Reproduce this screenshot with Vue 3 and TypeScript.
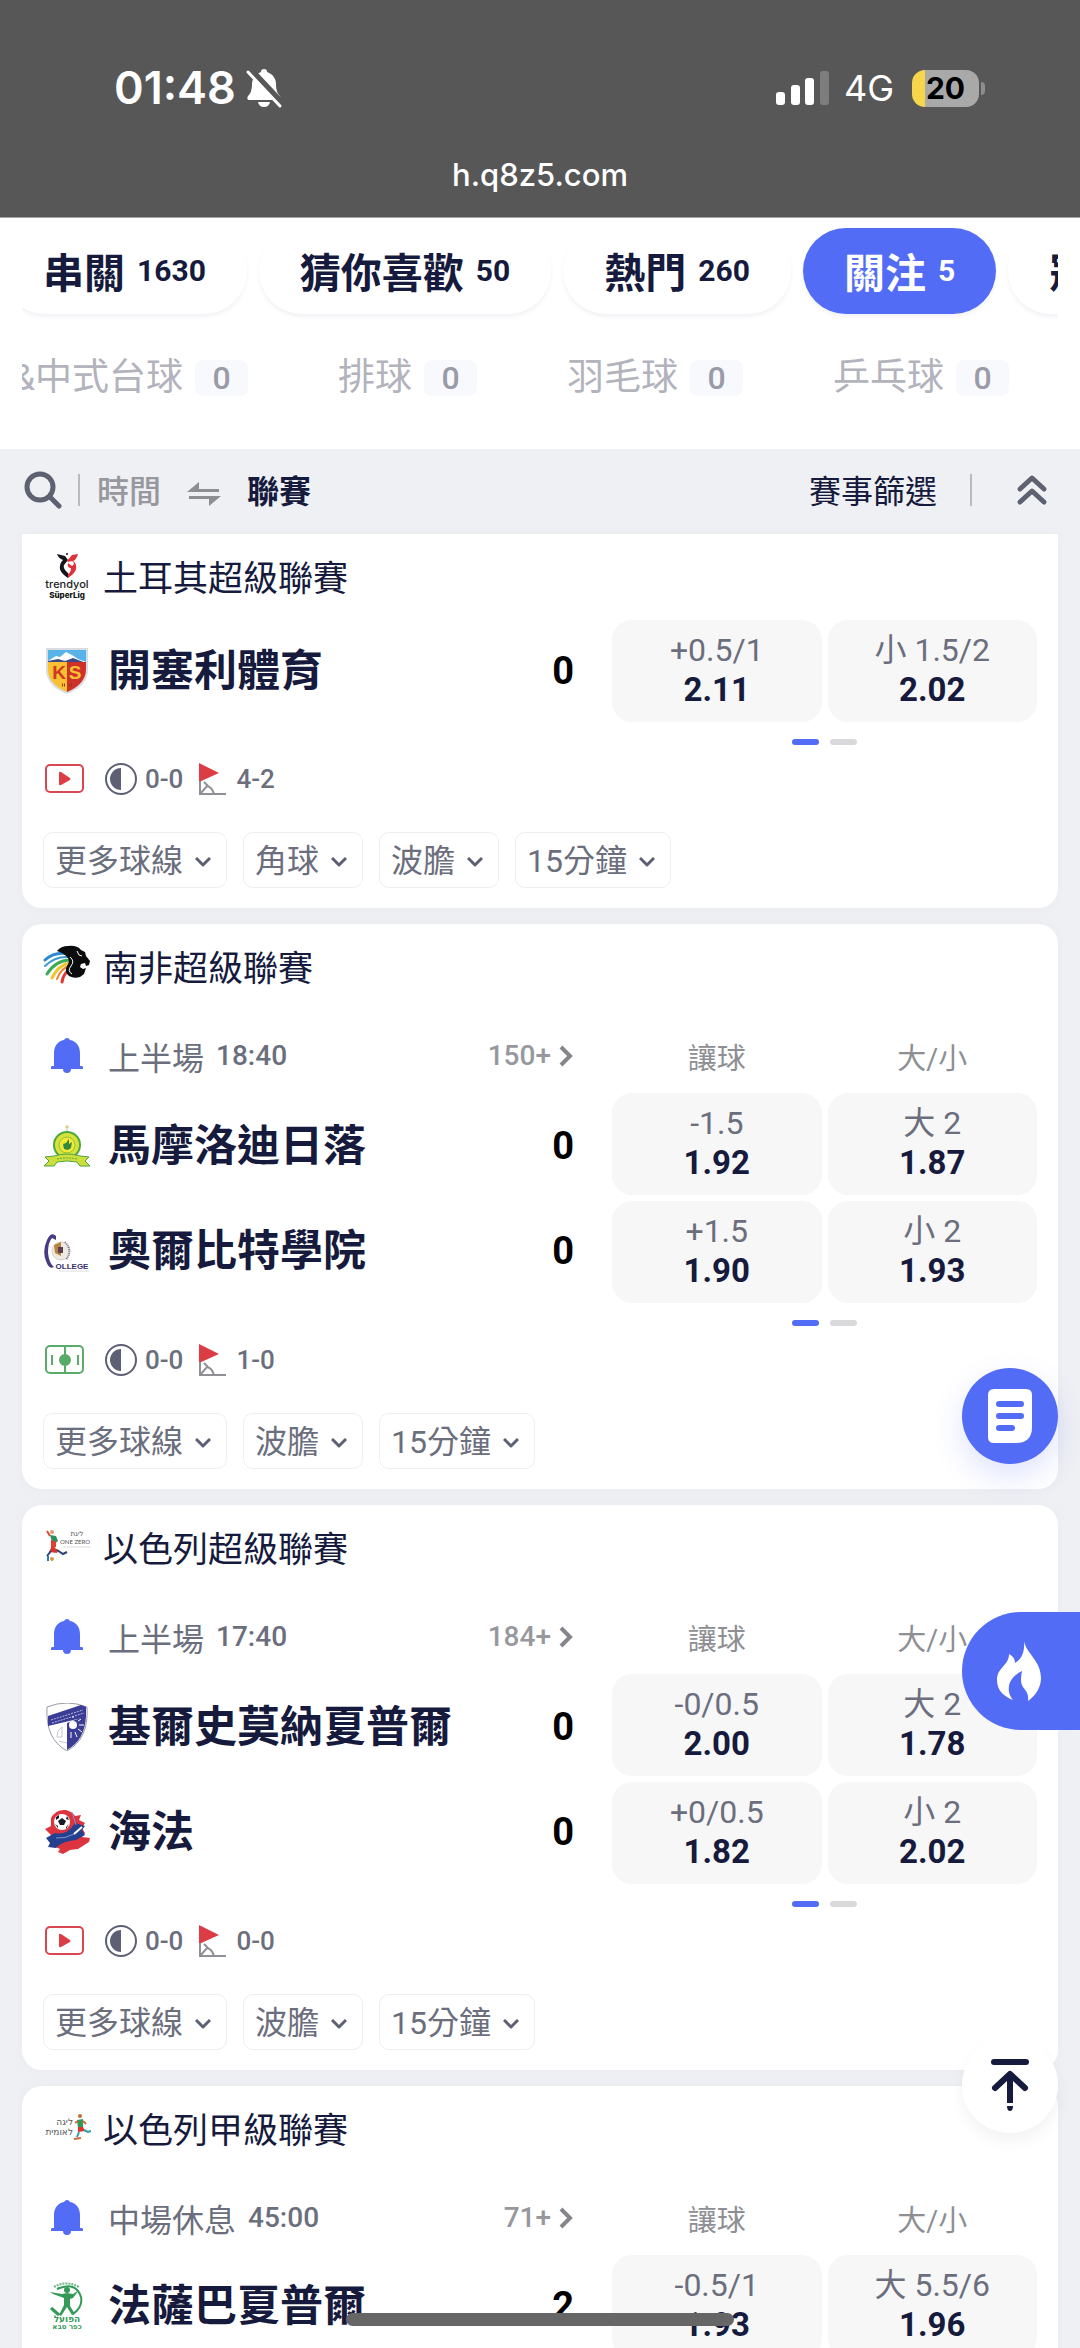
<script setup lang="ts">
import { onMounted, ref } from 'vue'

interface Tab { label: string; count?: number; active?: boolean }
interface Sport { label: string; count: number }
interface Odd { point: string; price: string }
interface Team { logo: string; name: string; score: number; odds: Odd[] }
interface Match {
  league: string
  logo: string
  period?: string
  clock?: string
  markets?: number
  teams: Team[]
  live?: 'video' | 'pitch'
  half?: string
  corners?: string
  more?: string[]
}

const tabs: Tab[] = [
  { label: '串關', count: 1630 },
  { label: '猜你喜歡', count: 50 },
  { label: '熱門', count: 260 },
  { label: '關注', count: 5, active: true },
  { label: '冠軍' },
]

const sports: Sport[] = [
  { label: '斯諾克&中式台球', count: 0 },
  { label: '排球', count: 0 },
  { label: '羽毛球', count: 0 },
  { label: '乒乓球', count: 0 },
]

// League and club badges, each drawn in a 48 by 48 box
const logos: Record<string, string> = {
  turkey: `
    <path d="M14 2l8 2 3 4-4 5c-1 3 1 5 4 8v5c-6-4-9-8-8-12 0-3 2-5 3-6-3-1-5-3-6-6z" fill="#15161b" />
    <path d="M35 2l-6 1-5 6 1 1 4-1c3 2 2 4 0 5l-4-3c-1 3 1 5 3 5 0 3-1 5-3 6v4c6-4 9-8 8-12 0-2-1-4-3-5 3-1 4-4 5-7z" fill="#e0313a" />
    <circle cx="24" cy="2" r="1" fill="#15161b" />
    <text x="24" y="36" text-anchor="middle" font-family="Inter, sans-serif" font-size="11" font-weight="500" fill="#222">trendyol</text>
    <text x="24" y="46" text-anchor="middle" font-family="Inter, sans-serif" font-size="8" font-weight="800" fill="#111">SüperLig</text>`,
  africa: `
    <g fill="none" stroke-width="2" stroke-linecap="round">
      <path d="M26 12Q12 9 2 18" stroke="#2d86d0" stroke-width="3" />
      <path d="M26 15Q12 14 2 24" stroke="#3799d8" />
      <path d="M26 18Q12 19 4 32" stroke="#39ac55" stroke-width="3" />
      <path d="M27 21Q15 23 9 36" stroke="#f3c52d" stroke-width="3" />
      <path d="M28 23Q18 26 14 37" stroke="#ef7c2d" />
      <path d="M29 26Q20 31 19 40" stroke="#e33531" stroke-width="3" />
    </g>
    <path d="M14 9Q18 4 25 4q9-1 13 4l4 2 1 4 4 5-1 4-3 1-1-3-4 1-1 3 3 2 3-1-2 6-4 3q-6 2-11-1-5-4-2-10 3-4 1-8-4-5-11-7z" fill="#0b0c0e" />
    <path d="M27 15q5 4 1 9t1 8M34 9l2 4 3 1" fill="none" stroke="#fff" />`,
  israel: `
    <circle cx="9" cy="9" r="2" fill="#d9a066" />
    <path d="M4 8l3 5" stroke="#e0453a" stroke-width="2" />
    <path d="M7 12l6 1 2 5-5 4z" fill="#2f8f5a" />
    <path d="M8 17l5 2 0 5-5 2z" fill="#e63c31" />
    <path d="M9 23l6 4-1 3-8-1z" fill="#d8352f" />
    <path d="M14 27l6 4 4-2M8 28l-4 5" fill="none" stroke="#2e3f74" stroke-width="2" />
    <circle cx="9" cy="36" r="2" fill="#d59a3a" />
    <path d="M5 33v5" stroke="#2a7abf" stroke-width="2" />
    <text x="34" y="13" text-anchor="middle" font-family="DejaVu Sans, sans-serif" font-size="7" fill="#555">ליגת</text>
    <text x="32" y="21" text-anchor="middle" font-family="Lato, sans-serif" font-size="6" fill="#555">ONE ZERO</text>
    <path d="M20 24h28" stroke="#ddd" />`,
  leumit: `
    <text x="30" y="21" text-anchor="start" direction="rtl" font-family="DejaVu Sans, sans-serif" font-size="9" fill="#555">ליגה</text>
    <text x="30" y="31" text-anchor="start" direction="rtl" font-family="DejaVu Sans, sans-serif" font-size="9" fill="#555">לאומית</text>
    <circle cx="37" cy="12" r="2" fill="#c56a3c" />
    <path d="M34 16l6-1 0 8-5 1z" fill="#2f9a56" />
    <path d="M35 23l5 0 2 4-7 1z" fill="#df352f" />
    <path d="M41 26l4 2 3-1M36 28l-2 5" fill="none" stroke="#2b9fa5" stroke-width="2" />
    <path d="M32 19l3-2M40 17l3 3M31 35l7-1" stroke="#d3663a" stroke-width="2" />`,
  kayseri: `
    <path d="M3 1h42v21q0 17-21 25Q3 39 3 22z" fill="#d9dde2" />
    <path d="M5 3h38v12H5z" fill="#58b4e8" />
    <path d="M5 14l8-5 4 1 6-5 6 3 6 4 8 3v3H5z" fill="#fff" />
    <path d="M5 14l10-2 7 2 8-3 13 5v-1H5z" fill="#3b4a86" />
    <path d="M5 15h19v30Q5 37 5 22z" fill="#f9c132" />
    <path d="M24 15h19v7q0 15-19 23z" fill="#cd3127" />
    <text x="16" y="32" text-anchor="middle" font-family="Liberation Sans, sans-serif" font-size="19" font-weight="700" fill="#cf3a22">K</text>
    <text x="32" y="32" text-anchor="middle" font-family="Liberation Sans, sans-serif" font-size="19" font-weight="700" fill="#f9c132">S</text>
    <path d="M19 38h3M26 38h4" stroke="#8e3a16" stroke-width="3" stroke-dasharray="1 1" />`,
  sundowns: `
    <path d="M24 3v6M22 5h4" stroke="#d5bd6b" />
    <circle cx="24" cy="23" r="13" fill="#d7e23a" stroke="#4fa83d" stroke-width="2" />
    <circle cx="24" cy="23" r="8" fill="#f2e937" stroke="#90c33b" />
    <path d="M20 22l3-1 3-4v5l3-2-1 6-3 2-4-1z" fill="#318a39" />
    <path d="M11 34q13-4 26 0l9 1-4 4 5 5-10 0-3-4q-10-2-20 0l-3 4H1l5-5-4-4z" fill="#cddf3a" stroke="#4da344" />
    <path d="M14 37q10-2 20 0" fill="none" stroke="#5fa83d" stroke-dasharray="2 1" />`,
  college: `
    <path d="M13 9Q8 4 4 13-1 24 3 34q3 9 8 6-5-4-6-14 0-11 4-15l4 2z" fill="#4a3a86" />
    <circle cx="18" cy="24" r="9" fill="#eee9e2" stroke="#d9cfc0" />
    <path d="M22 15q8 8 1 18" fill="none" stroke="#80718c" stroke-width="2" stroke-dasharray="1 1" />
    <path d="M11 18l7-3v14l-6-3z" fill="#b48540" />
    <path d="M15 20h5v6h-5z" fill="#5c3e4c" />
    <text x="29" y="42" text-anchor="middle" font-family="Liberation Sans, sans-serif" font-size="8" font-weight="700" fill="#35306a">OLLEGE</text>
    <path d="M16 44h30" stroke="#ddd" />`,
  ironi: `
    <path d="M4 4q20-8 40 0 2 32-20 44Q2 36 4 4z" fill="#fff" stroke="#9a9aa5" />
    <path d="M24 20l19-7q-1 24-19 34z" fill="#3b3c95" />
    <path d="M5 13L38 2l5 2v10L5 23z" fill="#3b3c95" />
    <path d="M8 17l32-10M9 20l32-10" stroke="#b9b9e0" stroke-dasharray="2 1" />
    <circle cx="30" cy="22" r="4" fill="#fff" />
    <path d="M30 15v-2M35 18l3-2M36 22h5M35 26l4 3M32 29l2 5M28 29v6" stroke="#fff" />
    <path d="M15 28l4-4v10h-5zM16 38l8 2" fill="none" stroke="#c5c5cf" />`,
  haifa: `
    <path d="M2 21l6-3 0-8q5-9 15-8 7 2 9 6l6-1-2 5 6 3-3 5 3 5-3 4 8 1-1 4-11 7-8 1-7 4-5-2 2-3-7-3 2-3-6-4 2-4z" fill="#dd3540" />
    <path d="M3 30l9-5q12 3 20-10l10 3-3 4 3 5-9 5q-14 1-20 8l-8-1 2-4z" fill="#25408f" />
    <path d="M31 26l8-7" fill="none" stroke="#fff" stroke-width="2" />
    <path d="M13 30q9 1 18-4M29 4l4 13" fill="none" stroke="#7b95cc" />
    <circle cx="19" cy="14" r="8" fill="#fff" />
    <path d="M19 10l4 3-2 4h-4l-2-4zM13 9l3-2 0 3-3 2zM24 8l2 4-3-1zM12 16l3 2v2zM26 16l-3 3v2z" fill="#191b2a" />`,
  saba: `
    <path d="M11 5Q23-2 36 5" fill="none" stroke="#6cb683" stroke-width="2" stroke-dasharray="2 1" />
    <path d="M14 7Q33-1 38 15q2 10-8 17" fill="none" stroke="#359a58" stroke-width="2" />
    <circle cx="24" cy="8" r="3" fill="#359a58" />
    <path d="M7 10l12 2 5-1 6 1 6-4-6 8-3 1 0 7 5 8-3 1-5-8-6 9-2-1 5-10v-7l-11-4z" fill="#359a58" />
    <path d="M8 26l8 7" stroke="#359a58" stroke-width="3" />
    <text x="24" y="40" text-anchor="middle" font-family="DejaVu Sans, sans-serif" font-size="9" font-weight="700" fill="#359a58">הפועל</text>
    <text x="24" y="47" text-anchor="middle" font-family="DejaVu Sans, sans-serif" font-size="7" font-weight="700" fill="#359a58">כפר סבא</text>`,
}

const tabStrip = ref<HTMLElement | null>(null)
const sportStrip = ref<HTMLElement | null>(null)

onMounted(() => {
  if (tabStrip.value) tabStrip.value.scrollLeft = 20
  if (sportStrip.value) sportStrip.value.scrollLeft = 124
})

const matches: Match[] = [
  {
    league: '土耳其超級聯賽',
    logo: 'turkey',
    teams: [
      { logo: 'kayseri', name: '開塞利體育', score: 0, odds: [{ point: '+0.5/1', price: '2.11' }, { point: '小 1.5/2', price: '2.02' }] },
    ],
    live: 'video',
    half: '0-0',
    corners: '4-2',
    more: ['更多球線', '角球', '波膽', '15分鐘'],
  },
  {
    league: '南非超級聯賽',
    logo: 'africa',
    period: '上半場',
    clock: '18:40',
    markets: 150,
    teams: [
      { logo: 'sundowns', name: '馬摩洛迪日落', score: 0, odds: [{ point: '-1.5', price: '1.92' }, { point: '大 2', price: '1.87' }] },
      { logo: 'college', name: '奧爾比特學院', score: 0, odds: [{ point: '+1.5', price: '1.90' }, { point: '小 2', price: '1.93' }] },
    ],
    live: 'pitch',
    half: '0-0',
    corners: '1-0',
    more: ['更多球線', '波膽', '15分鐘'],
  },
  {
    league: '以色列超級聯賽',
    logo: 'israel',
    period: '上半場',
    clock: '17:40',
    markets: 184,
    teams: [
      { logo: 'ironi', name: '基爾史莫納夏普爾', score: 0, odds: [{ point: '-0/0.5', price: '2.00' }, { point: '大 2', price: '1.78' }] },
      { logo: 'haifa', name: '海法', score: 0, odds: [{ point: '+0/0.5', price: '1.82' }, { point: '小 2', price: '2.02' }] },
    ],
    live: 'video',
    half: '0-0',
    corners: '0-0',
    more: ['更多球線', '波膽', '15分鐘'],
  },
  {
    league: '以色列甲級聯賽',
    logo: 'leumit',
    period: '中場休息',
    clock: '45:00',
    markets: 71,
    teams: [
      { logo: 'saba', name: '法薩巴夏普爾', score: 2, odds: [{ point: '-0.5/1', price: '1.93' }, { point: '大 5.5/6', price: '1.96' }] },
    ],
  },
]
</script>

<template>
  <div class="app">
    <header class="browser">
      <div class="status">
        <div class="status-left">
          <span class="clock">01:48</span>
          <svg width="36" height="40" viewBox="0 0 36 40" aria-label="靜音">
            <path d="M18 1c-2 0-3 1-3 3-6 2-9 7-9 12 0 7-2 10-4 12-1 2-1 4 1 4h30c2 0 2-2 1-4-2-2-4-5-4-12 0-5-3-10-9-12 0-2-1-3-3-3z" fill="#fff" />
            <path d="M12 34h12q-1 5-6 5t-6-5z" fill="#fff" />
            <path d="M4 1l34 36" stroke="#575757" stroke-width="6" />
            <path d="M2 4l32 34" stroke="#fff" stroke-width="3" stroke-linecap="round" />
          </svg>
        </div>
        <div class="status-right">
          <svg width="54" height="34" viewBox="0 0 54 34" aria-hidden="true">
            <rect x="0" y="21" width="9" height="13" rx="3" fill="#fff" />
            <rect x="15" y="14" width="9" height="20" rx="3" fill="#fff" />
            <rect x="29" y="7" width="9" height="27" rx="3" fill="#fff" />
            <rect x="44" y="0" width="9" height="34" rx="3" fill="#7d7d7d" />
          </svg>
          <span class="network">4G</span>
          <span class="battery">20</span>
        </div>
      </div>
      <div class="url">h.q8z5.com</div>
    </header>

    <nav ref="tabStrip" class="strip tabs">
      <button v-for="t in tabs" :key="t.label" type="button" class="tab" :class="{ active: t.active }">
        {{ t.label }}<span v-if="t.count" class="tab-count">{{ t.count }}</span>
      </button>
    </nav>

    <nav ref="sportStrip" class="strip sports">
      <a v-for="s in sports" :key="s.label" href="#" class="sport">
        {{ s.label }}<span class="sport-count">{{ s.count }}</span>
      </a>
    </nav>

    <div class="filter">
      <button type="button" class="plain" aria-label="搜尋">
        <svg width="38" height="38" viewBox="0 0 38 38" fill="none" stroke="#5d6170" stroke-width="5" stroke-linecap="round">
          <circle cx="16" cy="16" r="13" />
          <path d="M26 26l9 9" />
        </svg>
      </button>
      <i class="bar" />
      <button type="button" class="plain sort">時間</button>
      <svg class="swap" width="34" height="24" viewBox="0 0 34 24" fill="#8d8e94">
        <path d="M0 10L12 0v7h20v3zM34 14L22 24v-7H2v-3z" />
      </svg>
      <button type="button" class="plain sort on">聯賽</button>
      <button type="button" class="plain pick">賽事篩選</button>
      <i class="bar" />
      <button type="button" class="plain fold" aria-label="收合">
        <svg width="32" height="32" viewBox="0 0 32 32" fill="none" stroke="#5d6170" stroke-width="5" stroke-linecap="round" stroke-linejoin="round">
          <path d="M4 15L16 4l12 11M4 28l12-11 12 11" />
        </svg>
      </button>
    </div>

    <main class="list">
      <article v-for="m in matches" :key="m.league" class="card">
        <h2 class="league">
          <svg width="48" height="48" viewBox="0 0 48 48" aria-hidden="true" v-html="logos[m.logo]" />
          {{ m.league }}
        </h2>

        <div v-if="m.period" class="split heads">
          <div class="when">
            <svg class="bell" width="32" height="36" viewBox="0 0 32 36" fill="#536cf5" aria-label="提醒">
              <path d="M16 0q2 0 3 2c6 1 10 6 10 13v13h2q1 0 1 2v1H0v-1q0-2 1-2h2V15C3 8 7 3 13 2q1-2 3-2zM12 31h8q0 4-4 4t-4-4z" />
            </svg>
            <span>{{ m.period }}</span>
            <span class="num time">{{ m.clock }}</span>
            <a href="#" class="num all">
              {{ m.markets }}+
              <svg width="14" height="22" viewBox="0 0 14 22" fill="none" stroke="#85868c" stroke-width="4"><path d="M2 2l9 9-9 9" /></svg>
            </a>
          </div>
          <div class="pair">
            <span class="col">讓球</span>
            <span class="col">大/小</span>
          </div>
        </div>

        <div class="split">
          <div class="teams">
            <div v-for="t in m.teams" :key="t.name" class="team">
              <svg width="48" height="48" viewBox="0 0 48 48" aria-hidden="true" v-html="logos[t.logo]" />
              <span class="name">{{ t.name }}</span>
              <span class="num score">{{ t.score }}</span>
            </div>
          </div>
          <div class="pair">
            <template v-for="t in m.teams" :key="t.name">
              <button v-for="o in t.odds" :key="o.point" type="button" class="odd">
                <span class="point">{{ o.point }}</span>
                <span class="num price">{{ o.price }}</span>
              </button>
            </template>
            <div v-if="m.more" class="dots"><i class="on" /><i /></div>
          </div>
        </div>

        <template v-if="m.more">
          <div class="info">
            <svg v-if="m.live === 'video'" width="40" height="30" viewBox="0 0 40 30" aria-label="直播">
              <rect x="1" y="1" width="37" height="27" rx="4" fill="none" stroke="#d94850" stroke-width="2" />
              <path d="M14 9q0-2 2-1l9 6q1 1 0 2l-9 5q-2 1-2-1z" fill="#dc3c44" />
            </svg>
            <svg v-else width="40" height="30" viewBox="0 0 40 30" fill="none" stroke="#5aaa6a" stroke-width="2" aria-label="動畫">
              <rect x="1" y="1" width="37" height="27" rx="4" />
              <path d="M20 1v27M7 10v10M33 10v10" />
              <circle cx="20" cy="15" r="5" fill="#5aaa6a" />
            </svg>
            <svg class="half" width="32" height="32" viewBox="0 0 32 32">
              <circle cx="16" cy="16" r="15" fill="none" stroke="#5d6074" stroke-width="2" />
              <path d="M16 5v22a11 11 0 0 1 0-22z" fill="#5d6074" />
            </svg>
            <span class="num">{{ m.half }}</span>
            <svg class="flag" width="28" height="32" viewBox="0 0 28 32">
              <path d="M1 0l20 10L1 19z" fill="#dc3c44" />
              <path d="M2 18v13h26M2 31l7-8q5 1 7 8M6 19l4 4" fill="none" stroke="#8e9096" stroke-width="2" />
            </svg>
            <span class="num">{{ m.corners }}</span>
          </div>
          <div class="more">
            <button v-for="b in m.more" :key="b" type="button" class="chip">
              {{ b }}
              <svg width="16" height="10" viewBox="0 0 16 10" fill="none" stroke="#5d6074" stroke-width="3" stroke-linejoin="round"><path d="M1 1l7 7 7-7" /></svg>
            </button>
          </div>
        </template>
      </article>
    </main>

    <button type="button" class="float slip" aria-label="注單">
      <svg width="44" height="54" viewBox="0 0 44 54">
        <path d="M6 0h32q6 0 6 6v32q0 16-16 16H6q-6 0-6-6V6q0-6 6-6z" fill="#fff" />
        <path d="M11 15h22M11 27h22M11 39h13" stroke="#536cf5" stroke-width="6" stroke-linecap="round" />
      </svg>
    </button>
    <button type="button" class="float hot" aria-label="熱門">
      <svg width="46" height="60" viewBox="0 0 46 60" fill="#fff">
        <path d="M27 0c2 12 17 20 17 37 0 10-6 18-13 23 1-7-2-10-5-14-3-5-2-10-1-16-8 4-12 9-13 15-1 6 1 10 4 14C6 55 0 49 0 39c0-13 12-14 12-26 4 2 6 5 6 9 7-4 10-12 9-22z" />
      </svg>
    </button>
    <button type="button" class="float top" aria-label="回到頂部">
      <svg width="38" height="52" viewBox="0 0 38 52" fill="none" stroke="#161a3d" stroke-width="6" stroke-linecap="round" stroke-linejoin="round">
        <path d="M3 3h32M4 29l15-14 15 14" />
        <path d="M19 17v27" stroke-linecap="butt" />
        <path d="M16 47h6q0 5-3 5t-3-5z" fill="#161a3d" stroke="none" />
      </svg>
    </button>
    <div class="home" />
  </div>
</template>

<style>
body {
  margin: 0;
  background: #eff0f4;
}
</style>

<style scoped>
.app {
  display: flex;
  flex-direction: column;
  height: 100vh;
  overflow: hidden;
  background: #eff0f4;
  color: #161a3d;
  font-family: Roboto, "Noto Sans CJK TC", sans-serif;
  font-size: 32px;
}
.app > * {
  flex-shrink: 0;
}
.app * {
  box-sizing: border-box;
}
button {
  font: inherit;
  color: inherit;
  background: none;
  border: 0;
  padding: 0;
  white-space: nowrap;
}
a {
  color: inherit;
  text-decoration: none;
}
svg {
  display: block;
  flex-shrink: 0;
}
.num {
  font-weight: 500;
}

.browser {
  height: 218px;
  background: #575757;
  border-bottom: 1px solid #a5a5a5;
  color: #fff;
  font-family: Inter, sans-serif;
}
.status {
  display: flex;
  justify-content: space-between;
  align-items: center;
  padding: 68px 101px 0 114px;
  height: 108px;
}
.status-left,
.status-right {
  display: flex;
  align-items: center;
}
.clock {
  width: 132px;
  font-size: 45px;
  font-weight: 600;
  line-height: 40px;
}
.network {
  margin: 0 18px 0 14px;
  font-size: 36px;
  line-height: 36px;
}
.battery {
  position: relative;
  width: 67px;
  height: 37px;
  border-radius: 13px;
  background: linear-gradient(90deg, #f8d64c 13px, #a9a9a9 13px);
  color: #000;
  font-size: 30px;
  font-weight: 700;
  line-height: 37px;
  text-align: center;
}
.battery::after {
  content: "";
  position: absolute;
  right: -6px;
  top: 12px;
  width: 4px;
  height: 13px;
  border-radius: 0 4px 4px 0;
  background: #8d8d8d;
}
.url {
  margin-top: 47px;
  font-size: 31px;
  font-weight: 500;
  line-height: 40px;
  text-align: center;
}

.strip {
  display: flex;
  overflow-x: auto;
  scrollbar-width: none;
  background: #fff;
  border: 0 solid #fff;
  border-width: 0 22px;
}
.tabs {
  gap: 12px;
  padding: 10px 0;
}
.tab {
  display: flex;
  flex-shrink: 0;
  align-items: center;
  gap: 12px;
  height: 86px;
  padding: 0 41px 2px;
  border-radius: 43px;
  background: #fff;
  box-shadow: 0 3px 4px #f3f3f7;
  font-size: 41px;
  font-weight: 700;
}
.tab.active {
  background: #536cf5;
  color: #fff;
}
.tab-count {
  font-size: 30px;
}
.sports {
  gap: 90px;
  height: 125px;
  padding: 36px 49px 53px 0;
}
.sport {
  display: flex;
  flex-shrink: 0;
  align-items: center;
  gap: 12px;
  color: #b2b3bd;
  font-size: 37px;
  line-height: 36px;
  white-space: nowrap;
}
.sport-count {
  width: 53px;
  border-radius: 8px;
  background: #f8f9fc;
  color: #999ba8;
  font-size: 32px;
  font-weight: 500;
  text-align: center;
}

.filter {
  display: flex;
  align-items: center;
  height: 85px;
  padding: 0 32px 3px 24px;
}
.bar {
  width: 2px;
  height: 32px;
  background: #b9bac0;
}
.filter .plain:first-child {
  margin-right: 16px;
}
.sort,
.pick {
  padding-bottom: 3px;
}
.sort {
  margin-left: 17px;
  color: #97989e;
  font-weight: 500;
}
.swap {
  margin: 8px 9px 0 26px;
}
.sort.on {
  color: #161a3d;
  font-weight: 700;
}
.pick {
  margin: 0 33px 0 auto;
}
.fold {
  margin-left: 44px;
}

.list {
  display: flex;
  flex-direction: column;
  gap: 16px;
  padding: 0 22px;
}
.card {
  padding: 0 21px 20px;
  border-radius: 20px;
  background: #fff;
  box-shadow: 0 0 12px #e9eaf0;
}
.card:first-child {
  border-radius: 0 0 20px 20px;
}
.league {
  display: flex;
  align-items: center;
  gap: 12px;
  height: 88px;
  margin: 0;
  padding-bottom: 5px;
  font-size: 35px;
  font-weight: 400;
}
.split {
  display: grid;
  grid-template-columns: minmax(0, 1fr) 425px;
  column-gap: 37px;
}
.pair {
  display: grid;
  grid-template-columns: 1fr 1fr;
  gap: 6px;
}
.card:first-child .split {
  margin-top: -2px;
}
.heads {
  height: 81px;
  padding-top: 6px;
}
.when,
.pair {
  align-items: center;
}
.when {
  display: flex;
  color: #6b6e7d;
}
.bell {
  margin: 0 25px 0 8px;
}
.time {
  margin-left: 12px;
  font-size: 28px;
}
.all {
  display: flex;
  align-items: center;
  gap: 8px;
  margin: 0 2px 0 auto;
  color: #97989e;
  font-size: 28px;
}
.col {
  color: #8e8f95;
  font-size: 29px;
  text-align: center;
}
.teams {
  display: flex;
  flex-direction: column;
  height: calc(100% - 23px);
}
.team {
  display: flex;
  flex: 1;
  align-items: center;
}
.card:last-child .teams {
  height: 100%;
}
.name {
  margin-left: 17px;
  padding-bottom: 8px;
  font-size: 43px;
  font-weight: 700;
  white-space: nowrap;
}
.score {
  margin: 0 1px 0 auto;
  color: #000;
  font-size: 38px;
  font-weight: 700;
}
.odd {
  display: flex;
  flex-direction: column;
  align-items: center;
  height: 102px;
  padding: 10px 0;
  border-radius: 20px;
  background: #f7f7f8;
  line-height: 40px;
}
.point {
  color: #6b6e7d;
}
.price {
  font-size: 33px;
  font-weight: 700;
}
.dots {
  display: flex;
  grid-column: 1 / -1;
  justify-content: center;
  gap: 11px;
  padding-top: 11px;
}
.dots i {
  width: 27px;
  height: 6px;
  border-radius: 3px;
  background: #d9d9db;
}
.dots .on {
  background: #536cf5;
}
.info {
  display: flex;
  align-items: center;
  height: 32px;
  margin: 18px 0 37px;
  padding-left: 2px;
  color: #6b6e7d;
  font-size: 26px;
}
.half {
  margin: 0 8px 0 20px;
}
.flag {
  margin: 0 10px 0 15px;
}
.more {
  display: flex;
  gap: 16px;
}
.chip {
  display: flex;
  align-items: center;
  gap: 12px;
  height: 56px;
  padding: 0 15px 4px 11px;
  border: 1px solid #eeeef2;
  border-radius: 10px;
  color: #6b6e7d;
}
.chip svg {
  margin-top: 7px;
}

.float {
  position: fixed;
  right: 22px;
  display: flex;
  align-items: center;
  justify-content: center;
  width: 96px;
  height: 96px;
  border-radius: 50%;
}
.slip {
  bottom: 884px;
  background: #536cf5;
  box-shadow: 0 12px 30px #536cf530;
}
.hot {
  right: 0;
  bottom: 618px;
  width: 118px;
  height: 118px;
  padding-right: 3px;
  border-radius: 59px 0 0 59px;
  background: #536cf5;
}
.top {
  bottom: 215px;
  background: #fff;
  box-shadow: 0 8px 16px #0000000d;
}
.home {
  position: fixed;
  bottom: 22px;
  left: 32%;
  right: 32%;
  height: 13px;
  border-radius: 7px;
  background: #666;
}
</style>
